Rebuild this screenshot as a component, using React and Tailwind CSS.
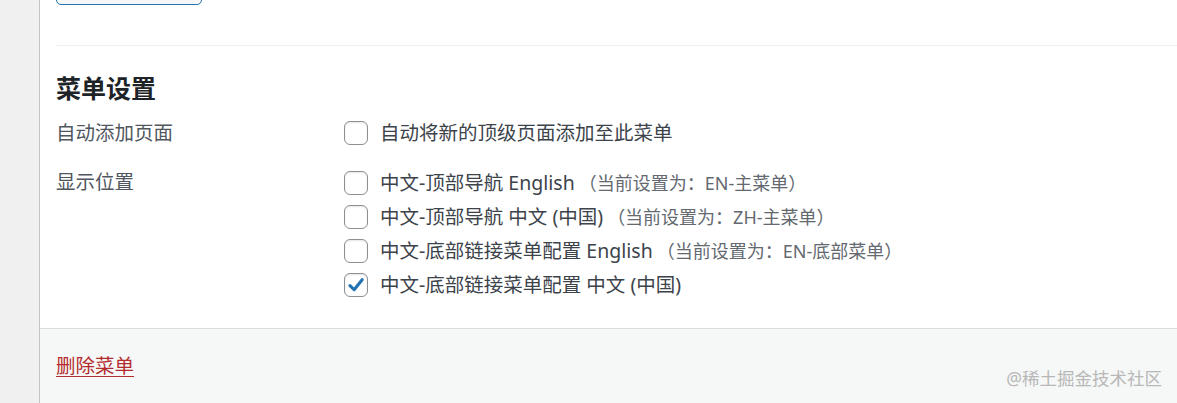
import React from 'react'

const locations = [
  { label: '中文-顶部导航 English', note: '（当前设置为：EN-主菜单）', checked: false },
  { label: '中文-顶部导航 中文 (中国)', note: '（当前设置为：ZH-主菜单）', checked: false },
  { label: '中文-底部链接菜单配置 English', note: '（当前设置为：EN-底部菜单）', checked: false },
  { label: '中文-底部链接菜单配置 中文 (中国)', note: null, checked: true },
]

function Box({ checked }) {
  return (
    <span className="flex h-6 w-6 shrink-0 items-center justify-center rounded-[6px] border border-[#8c8f94] bg-white shadow-[inset_0_1px_2px_rgba(0,0,0,0.1)]">
      {checked && (
        <svg viewBox="0 0 20 20" className="h-[22px] w-[22px]">
          <path d="M4.5 10.5 L8.3 14.3 L15.6 5.2" fill="none" stroke="#2271b1" strokeWidth="2.8" strokeLinecap="round" strokeLinejoin="round" />
        </svg>
      )}
    </span>
  )
}

export default function App() {
  return (
    <div className="relative flex h-[403px] w-full overflow-hidden bg-white font-['Noto_Sans','Noto_Sans_CJK_SC',sans-serif] text-[#3c434a]">
      <div className="w-[39px] shrink-0 bg-[#f0f0f1]" />
      <div className="flex flex-1 flex-col border-l border-[#c3c4c7]">
        <div className="flex-1 pl-4">
          <div className="-mt-[35px] h-10 w-[146px] rounded-[5px] border border-[#2271b1] bg-[#f6f7f7]" />
          <div className="mt-10 border-t border-[#f0f0f1]" />
          <h3 className="mt-[26px] text-[25px] font-bold leading-8 text-[#1d2327]">菜单设置</h3>
          <div className="mt-3 flex h-[34px] items-center">
            <span className="w-[288px] text-[19.5px] text-[#50575e]">自动添加页面</span>
            <label className="flex items-center gap-3 text-[19.5px]">
              <Box checked={false} />
              <span>自动将新的顶级页面添加至此菜单</span>
            </label>
          </div>
          <div className="mt-4 flex items-start">
            <span className="flex h-[32px] w-[288px] items-center text-[19.5px] text-[#50575e]">显示位置</span>
            <div className="flex flex-col">
              {locations.map(loc => (
                <label key={loc.label} className="flex h-[34px] items-center gap-3 text-[19.5px]">
                  <Box checked={loc.checked} />
                  <span>
                    {loc.label}
                    {loc.note && <span className="ml-1 text-[18px] text-[#646970]">{loc.note}</span>}
                  </span>
                </label>
              ))}
            </div>
          </div>
        </div>
        <div className="flex h-[75px] items-center border-t border-[#dcdcde] bg-[#f6f7f7] pl-4">
          <a href="#" className="text-[19.5px] text-[#b32d2e] underline underline-offset-[3px]">删除菜单</a>
        </div>
      </div>
      <span className="absolute bottom-[12px] right-[15px] text-[17.5px] text-[#b8b8b8]">@稀土掘金技术社区</span>
    </div>
  )
}
